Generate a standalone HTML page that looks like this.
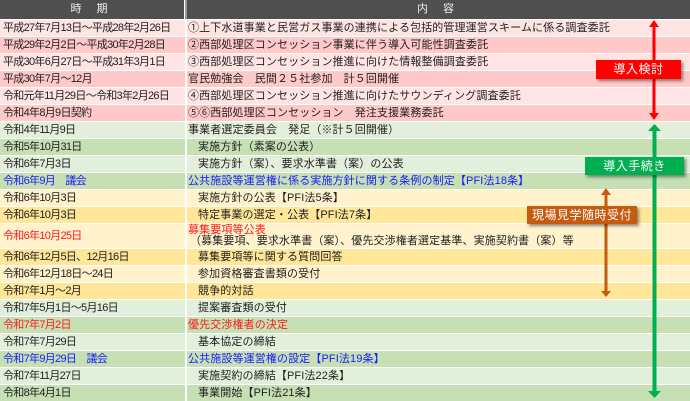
<!DOCTYPE html>
<html><head><meta charset="utf-8"><style>
body{margin:0;width:690px;height:401px;position:relative;overflow:hidden;background:#fff;font-family:"Liberation Sans","Noto Sans CJK JP",sans-serif;font-size:11px;color:#222;}
.r{position:absolute;left:0;width:690px;height:16px;}
.d,.c{position:absolute;top:0;line-height:16px;white-space:nowrap;}
.d{left:3px;letter-spacing:-0.7px}
.c{left:188px;letter-spacing:0.12px}
.i{left:198px}
.pl{background:#ffe4e4}.pd{background:#ffc9c9}
.gl{background:#e2efda}.gd{background:#c6e0b4}
.yl{background:#fff2cc}.yd{background:#ffe699}
.b{color:#1a1aff}.red{color:#ff1a1a}
.hd{position:absolute;top:0;height:19px;background:#4f4f4f;color:#eee;line-height:19px;text-align:center;font-size:11px;letter-spacing:6px}
.box{position:absolute;color:#fff;font-size:12px;text-align:center;box-shadow:2px 2px 3px rgba(0,0,0,.45);letter-spacing:0.5px}
</style></head><body>
<div class="hd" style="left:0;width:184px">時 期</div>
<div class="hd" style="left:187px;width:503px">内 容</div>

<div class="r pl" style="top:20px"><span class="d">平成27年7月13日～平成28年2月26日</span><span class="c">①上下水道事業と民営ガス事業の連携による包括的管理運営スキームに係る調査委託</span></div>
<div class="r pd" style="top:37px"><span class="d">平成29年2月2日～平成30年2月28日</span><span class="c">②西部処理区コンセッション事業に伴う導入可能性調査委託</span></div>
<div class="r pl" style="top:54px"><span class="d">平成30年6月27日～平成31年3月1日</span><span class="c">③西部処理区コンセッション推進に向けた情報整備調査委託</span></div>
<div class="r pd" style="top:71px"><span class="d">平成30年7月～12月</span><span class="c">官民勉強会　民間２５社参加　計５回開催</span></div>
<div class="r pl" style="top:88px"><span class="d">令和元年11月29日～令和3年2月26日</span><span class="c">④西部処理区コンセッション推進に向けたサウンディング調査委託</span></div>
<div class="r pd" style="top:105px"><span class="d">令和4年8月9日契約</span><span class="c">⑤⑥西部処理区コンセッション　発注支援業務委託</span></div>
<div class="r gl" style="top:122px"><span class="d">令和4年11月9日</span><span class="c">事業者選定委員会　発足（※計５回開催）</span></div>
<div class="r gd" style="top:139px"><span class="d">令和5年10月31日</span><span class="c i">実施方針（素案の公表）</span></div>
<div class="r gl" style="top:156px"><span class="d">令和6年7月3日</span><span class="c i">実施方針（案）、要求水準書（案）の公表</span></div>
<div class="r gd b" style="top:173px"><span class="d">令和6年9月　議会</span><span class="c">公共施設等運営権に係る実施方針に関する条例の制定【PFI法18条】</span></div>
<div class="r yl" style="top:190px"><span class="d">令和6年10月3日</span><span class="c i">実施方針の公表【PFI法5条】</span></div>
<div class="r yd" style="top:207px"><span class="d">令和6年10月3日</span><span class="c i">特定事業の選定・公表【PFI法7条】</span></div>
<div class="r yl" style="top:224px;height:24px"><span class="d red" style="line-height:24px">令和6年10月25日</span><span class="c red" style="line-height:11px;top:1px">募集要項等公表</span><span class="c" style="left:190px;top:11px;line-height:13px">（募集要項、要求水準書（案）、優先交渉権者選定基準、実施契約書（案）等</span></div>
<div class="r yd" style="top:249px"><span class="d">令和6年12月5日、12月16日</span><span class="c i">募集要項等に関する質問回答</span></div>
<div class="r yl" style="top:266px"><span class="d">令和6年12月18日～24日</span><span class="c i">参加資格審査書類の受付</span></div>
<div class="r yd" style="top:283px"><span class="d">令和7年1月～2月</span><span class="c i">競争的対話</span></div>
<div class="r gl" style="top:300px"><span class="d">令和7年5月1日～5月16日</span><span class="c i">提案審査類の受付</span></div>
<div class="r gd red" style="top:317px"><span class="d">令和7年7月2日</span><span class="c">優先交渉権者の決定</span></div>
<div class="r gl" style="top:334px"><span class="d">令和7年7月29日</span><span class="c i">基本協定の締結</span></div>
<div class="r gd b" style="top:351px"><span class="d">令和7年9月29日　議会</span><span class="c">公共施設等運営権の設定【PFI法19条】</span></div>
<div class="r gl" style="top:368px"><span class="d">令和7年11月27日</span><span class="c i">実施契約の締結【PFI法22条】</span></div>
<div class="r gd" style="top:385px"><span class="d">令和8年4月1日</span><span class="c i">事業開始【PFI法21条】</span></div>

<div style="position:absolute;left:185px;top:0;width:2px;height:401px;background:#fff"></div>
<div style="position:absolute;left:185px;top:0;width:2px;height:19px;background:#9a9a9a"></div>

<svg style="position:absolute;left:0;top:0" width="690" height="401">
<g fill="#ff0000"><rect x="652.5" y="26" width="3" height="88"/><polygon points="649,27 654,20 659,27"/><polygon points="649,113 654,120 659,113"/></g>
<g fill="#00b050"><rect x="652.5" y="130" width="4" height="262"/><polygon points="648,131 654.5,124 661,131"/><polygon points="648,391 654.5,398 661,391"/></g>
<g fill="#c55a11"><rect x="604.5" y="194" width="3" height="98"/><polygon points="601,195 606,188 611,195"/><polygon points="601,291 606,297 611,291"/></g>
</svg>
<div class="box" style="left:596px;top:60px;width:85px;height:19px;line-height:19px;background:#ff0000">導入検討</div>
<div class="box" style="left:585px;top:157px;width:99px;height:18px;line-height:18px;background:#00b050">導入手続き</div>
<div class="box" style="left:527px;top:206px;width:110px;height:18px;line-height:18px;background:#c55a11">現場見学随時受付</div>
</body></html>
